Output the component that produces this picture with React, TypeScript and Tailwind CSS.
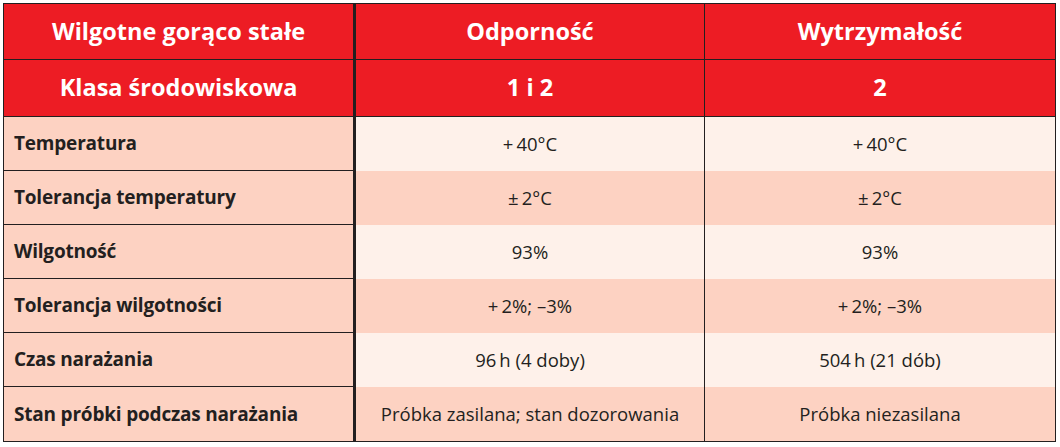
const rows = [
  { label: "Temperatura", a: "+\u200940°C", b: "+\u200940°C" },
  { label: "Tolerancja temperatury", a: "±\u20092°C", b: "±\u20092°C" },
  { label: "Wilgotność", a: "93%", b: "93%" },
  { label: "Tolerancja wilgotności", a: "+\u20092%; –3%", b: "+\u20092%; –3%" },
  { label: "Czas narażania", a: "96\u2009h (4 doby)", b: "504\u2009h (21 dób)" },
  { label: "Stan próbki podczas narażania", a: "Próbka zasilana; stan dozorowania", b: "Próbka niezasilana" },
]

export default function App() {
  return (
    <div className="w-[1060px] h-[447px] bg-white pt-[3px] pl-[3px]" style={{ fontFamily: "'Open Sans', sans-serif" }}>
      <div className="w-[1053px] border border-[#231f20] text-[#231f20]">
        <div className="flex h-[56px] bg-[#ed1c24] text-white font-bold text-[23.5px] border-b border-[#231f20]">
          <div className="w-[352px] border-r-[3px] border-[#231f20] flex items-center justify-center">Wilgotne gorąco stałe</div>
          <div className="w-[349px] border-r border-[#231f20] flex items-center justify-center">Odporność</div>
          <div className="flex-1 flex items-center justify-center">Wytrzymałość</div>
        </div>
        <div className="flex h-[57px] bg-[#ed1c24] text-white font-bold text-[23.5px] border-b border-[#231f20]">
          <div className="w-[352px] border-r-[3px] border-[#231f20] flex items-center justify-center">Klasa środowiskowa</div>
          <div className="w-[349px] border-r border-[#231f20] flex items-center justify-center">1 i 2</div>
          <div className="flex-1 flex items-center justify-center">2</div>
        </div>
        {rows.map((r, i) => {
          const bg = i % 2 === 0 ? "bg-[#fef1ea]" : "bg-[#fdd2c2]"
          const last = i === rows.length - 1
          return (
            <div key={i} className="flex h-[54px] text-[18.5px]">
              <div
                className={`w-[352px] bg-[#fdd2c2] border-r-[3px] border-[#231f20] flex items-center pl-[10px] font-bold text-[19px] tracking-[-0.2px] ${last ? "" : "border-b"}`}
              >
                {r.label}
              </div>
              <div className={`w-[349px] ${bg} border-r border-[#231f20] flex items-center justify-center`}>{r.a}</div>
              <div className={`flex-1 ${bg} flex items-center justify-center`}>{r.b}</div>
            </div>
          )
        })}
      </div>
    </div>
  )
}
